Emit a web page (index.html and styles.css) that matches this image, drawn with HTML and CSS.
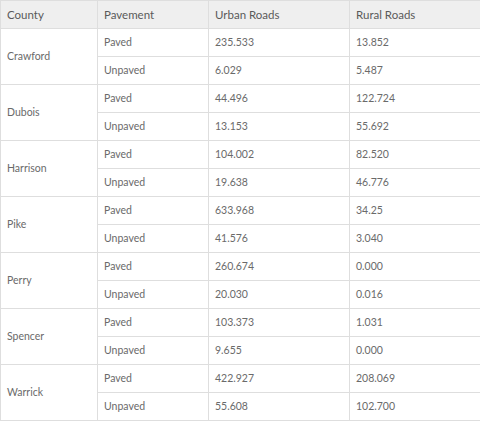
FILE: index.html
```html
<!DOCTYPE html>
<html>
<head>
<meta charset="utf-8">
<link rel="stylesheet" href="styles.css">
</head>
<body>
<table class="roads">
  <colgroup>
    <col class="c-county">
    <col class="c-pave">
    <col class="c-urban">
    <col class="c-rural">
  </colgroup>
  <thead>
    <tr><th>County</th><th>Pavement</th><th>Urban Roads</th><th>Rural Roads</th></tr>
  </thead>
  <tbody>
    <tr><td rowspan="2" class="county">Crawford</td><td>Paved</td><td>235.533</td><td>13.852</td></tr>
    <tr><td>Unpaved</td><td>6.029</td><td>5.487</td></tr>
    <tr><td rowspan="2" class="county">Dubois</td><td>Paved</td><td>44.496</td><td>122.724</td></tr>
    <tr><td>Unpaved</td><td>13.153</td><td>55.692</td></tr>
    <tr><td rowspan="2" class="county">Harrison</td><td>Paved</td><td>104.002</td><td>82.520</td></tr>
    <tr><td>Unpaved</td><td>19.638</td><td>46.776</td></tr>
    <tr><td rowspan="2" class="county">Pike</td><td>Paved</td><td>633.968</td><td>34.25</td></tr>
    <tr><td>Unpaved</td><td>41.576</td><td>3.040</td></tr>
    <tr><td rowspan="2" class="county">Perry</td><td>Paved</td><td>260.674</td><td>0.000</td></tr>
    <tr><td>Unpaved</td><td>20.030</td><td>0.016</td></tr>
    <tr><td rowspan="2" class="county">Spencer</td><td>Paved</td><td>103.373</td><td>1.031</td></tr>
    <tr><td>Unpaved</td><td>9.655</td><td>0.000</td></tr>
    <tr><td rowspan="2" class="county">Warrick</td><td>Paved</td><td>422.927</td><td>208.069</td></tr>
    <tr><td>Unpaved</td><td>55.608</td><td>102.700</td></tr>
  </tbody>
</table>
</body>
</html>
```
FILE: styles.css
```css
html, body {
  margin: 0;
  padding: 0;
  background: #ffffff;
}
.roads {
  border-collapse: collapse;
  table-layout: fixed;
  width: 480px;
  font-family: Lato, "Open Sans", sans-serif;
  font-size: 10.5px;
  color: #6a6a6a;
}
.c-county { width: 97px; }
.c-pave { width: 111px; }
.c-urban { width: 141px; }
.c-rural { width: 131px; }
.roads th, .roads td {
  border: 1px solid #dedede;
  height: 28px;
  padding: 0 0 1px 6px;
  text-align: left;
  vertical-align: middle;
  font-weight: normal;
  box-sizing: border-box;
}
.roads th {
  background: #efefef;
  color: #5a5a5a;
  font-size: 11.5px;
}
```
